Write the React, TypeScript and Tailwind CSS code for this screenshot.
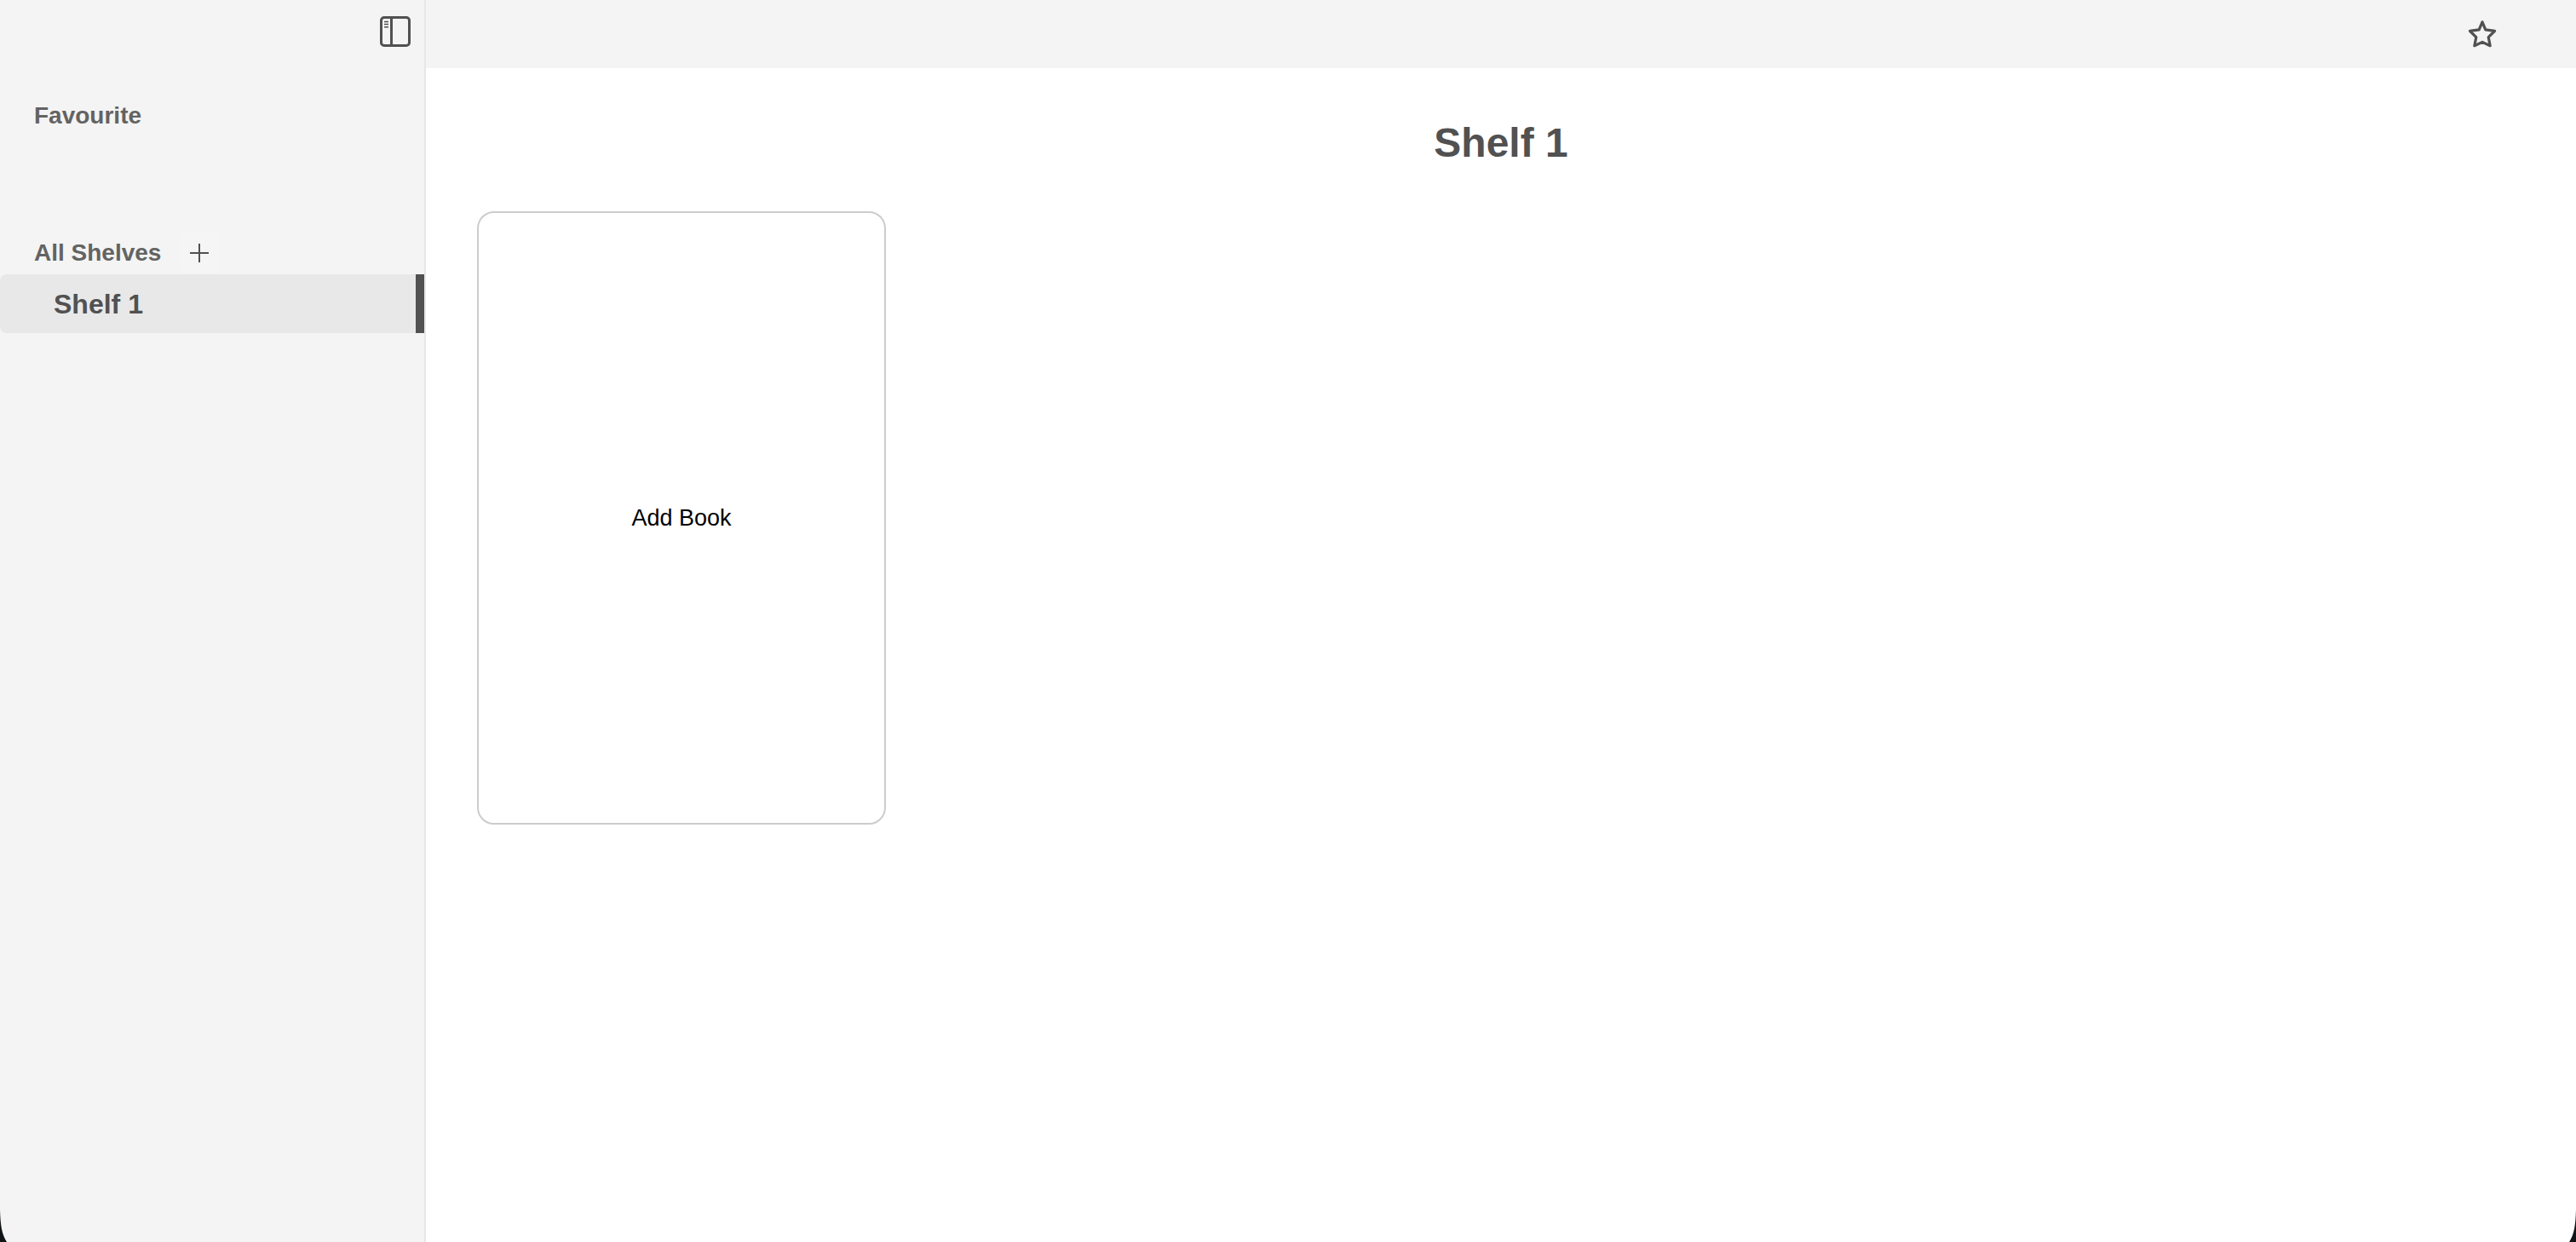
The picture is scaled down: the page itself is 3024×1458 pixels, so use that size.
import React from "react";

function SidebarIcon() {
  return (
    <svg width="36" height="36" viewBox="0 0 36 36" fill="none" stroke="#515151" aria-hidden="true">
      <rect x="1.5" y="1.5" width="33" height="33" rx="3.5" strokeWidth="3" />
      <path d="M13.5 2V34" strokeWidth="3" />
      <path d="M5 6.5H10M5 9.5H10M5 12.8H10" strokeWidth="1.5" />
    </svg>
  );
}

function StarIcon() {
  return (
    <svg width="36" height="36" viewBox="0 0 36 36" fill="none" stroke="#515151" strokeWidth="3.2" strokeLinejoin="round" aria-hidden="true">
      <path d="M18 3.8L21.8 12.9L32.6 14.3L25.2 21.6L27.2 31.7L18 27.4L8.8 31.7L10.8 21.6L3.4 14.3L14.2 12.9Z" />
    </svg>
  );
}

function PlusIcon() {
  return (
    <svg width="22" height="22" viewBox="0 0 22 22" fill="none" stroke="#515151" strokeWidth="2" aria-hidden="true">
      <path d="M11 0V22M0 11H22" />
    </svg>
  );
}

function WindowCorner({ className }: { className: string }) {
  return (
    <svg className={className} width="8" height="38" viewBox="0 0 8 38" aria-hidden="true">
      <path d="M0 0C0.5 18 2 29 8 38H0Z" fill="#101416" />
    </svg>
  );
}

const shelves = ["Shelf 1"];

export default function App() {
  return (
    <div className="relative flex min-h-screen overflow-hidden bg-white font-['Liberation_Sans',Arial,sans-serif] text-[#515151]">
      <aside className="w-[500px] shrink-0 border-r-2 border-[#e7e7e7] bg-[#f4f4f4]">
        <div className="flex h-20 items-start justify-end pt-[19px] pr-4">
          <button type="button" aria-label="Toggle sidebar">
            <SidebarIcon />
          </button>
        </div>
        <h2 className="mt-10 px-10 text-[28px] leading-8 font-bold text-[#636363]">Favourite</h2>
        <div className="mt-[121px] flex h-12 items-center pl-10">
          <h2 className="text-[28px] leading-8 font-bold text-[#636363]">All Shelves</h2>
          <button
            type="button"
            aria-label="Add shelf"
            className="ml-[21px] flex h-12 w-12 items-center justify-center rounded-lg bg-[#f5f5f5]"
          >
            <PlusIcon />
          </button>
        </div>
        <nav>
          {shelves.map((shelf) => (
            <a
              key={shelf}
              href="#shelf"
              aria-current="page"
              className="mt-px flex h-[69px] items-center justify-between rounded-l-lg bg-[#e8e8e8] pl-[63px] text-[32px] leading-9 font-bold"
            >
              {shelf}
              <span className="w-2.5 self-stretch bg-[#515151]" />
            </a>
          ))}
        </nav>
      </aside>
      <div className="min-w-0 flex-1">
        <header className="flex h-20 items-center justify-end bg-[#f4f4f4] pr-[92px]">
          <button type="button" aria-label="Add to favourites">
            <StarIcon />
          </button>
        </header>
        <main className="px-[60px] pt-[60px]">
          <h1 className="text-center text-5xl leading-14 font-bold">Shelf 1</h1>
          <div className="mt-[52px] flex flex-wrap gap-10">
            <button
              type="button"
              className="h-[720px] w-[480px] rounded-[20px] border-2 border-[#cccccc] bg-white text-[27px] text-black"
            >
              Add Book
            </button>
          </div>
        </main>
      </div>
      <WindowCorner className="absolute bottom-0 left-0" />
      <WindowCorner className="absolute right-0 bottom-0 -scale-x-100" />
    </div>
  );
}
